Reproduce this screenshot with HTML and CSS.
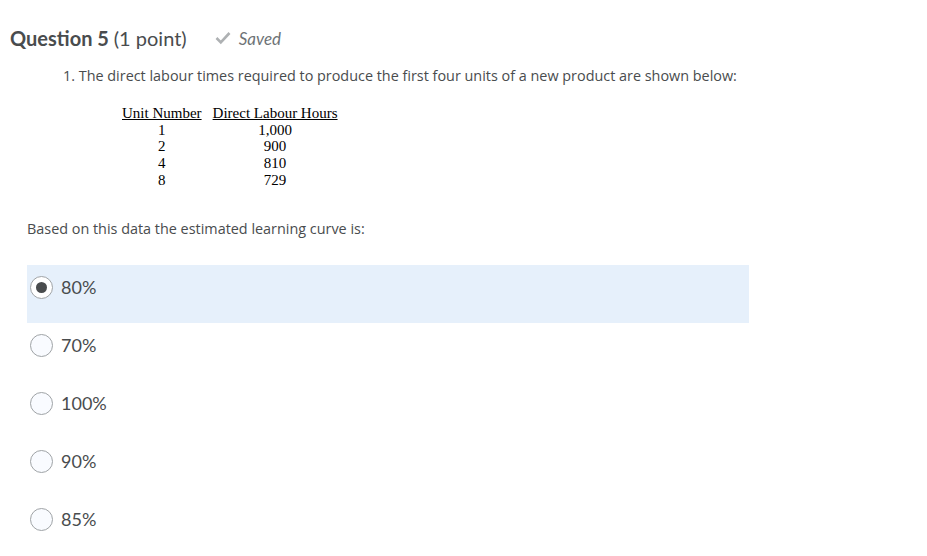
FILE: index.html
```html
<!DOCTYPE html>
<html>
<head>
<meta charset="utf-8">
<link rel="stylesheet" href="styles.css">
</head>
<body>
<div class="page">
  <div class="qhead">
    <h2 class="qtitle">Question 5 <span class="pts">(1 point)</span></h2>
    <span class="saved">
      <svg class="check" width="16" height="14" viewBox="0 0 16 14"><path d="M1.5 7 L5.8 11.3 L14.5 2" fill="none" stroke="#aeb1b3" stroke-width="2.6"/></svg>
      <span class="savedtxt">Saved</span>
    </span>
  </div>
  <ol class="qtext">
    <li>The direct labour times required to produce the first four units of a new product are shown below:</li>
  </ol>
  <table class="data">
    <tr><th>Unit Number</th><th>Direct Labour Hours</th></tr>
    <tr><td>1</td><td>1,000</td></tr>
    <tr><td>2</td><td>900</td></tr>
    <tr><td>4</td><td>810</td></tr>
    <tr><td>8</td><td>729</td></tr>
  </table>
  <p class="prompt">Based on this data the estimated learning curve is:</p>
  <div class="options">
    <label class="opt selected"><span class="radio on"></span><span class="lbl">80%</span></label>
    <label class="opt"><span class="radio"></span><span class="lbl">70%</span></label>
    <label class="opt"><span class="radio"></span><span class="lbl">100%</span></label>
    <label class="opt"><span class="radio"></span><span class="lbl">90%</span></label>
    <label class="opt"><span class="radio"></span><span class="lbl">85%</span></label>
  </div>
</div>
</body>
</html>
```
FILE: styles.css
```css
html, body { margin: 0; padding: 0; background: #fff; }
.page { padding: 23px 0 0 10px; font-family: Lato, sans-serif; color: #494c4e; }
.qhead { display: flex; align-items: center; height: 30px; }
.qtitle { margin: 0; font-size: 20px; font-weight: 700; color: #494c4e; }
.pts { font-weight: 400; }
.saved { display: flex; align-items: center; margin-left: 28px; gap: 8px; }
.savedtxt { font-style: italic; font-size: 17px; color: #6e7376; }
.qtext { margin: 12px 0 0; padding-left: 53px; list-style: none; font-family: "Open Sans", sans-serif; font-size: 14.4px; color: #494c4e; }
.qtext li { line-height: 22px; }
.qtext li::before { content: "1. "; }
.data { margin: 18px 0 0 112px; border-collapse: collapse; font-family: "Liberation Serif", serif; font-size: 15px; color: #000; }
.data th { font-weight: 400; text-decoration: underline; padding: 0; line-height: 16.7px; }
.data th + th { padding-left: 11px; }
.data td { text-align: center; padding: 0; line-height: 16.7px; }
.data td + td { padding-left: 11px; }
.prompt { margin: 29px 0 0 17px; font-family: "Open Sans", sans-serif; font-size: 14.4px; color: #494c4e; line-height: 22px; }
.options { margin-top: 25px; margin-left: 17px; display: flex; flex-direction: column; width: 722px; }
.opt { display: flex; align-items: center; height: 58px; box-sizing: border-box; padding-top: 11px; align-items: flex-start; }
.opt.selected { background: #e6f0fb; }
.radio { width: 21px; height: 21px; border: 1px solid #9fa3a6; border-radius: 50%; background: #f9fbff; margin-left: 3px; box-sizing: content-box; display: flex; align-items: center; justify-content: center; }
.radio.on { background: #fff; }
.radio.on::after { content: ""; width: 11px; height: 11px; border-radius: 50%; background: #494c4e; }
.lbl { margin-left: 8px; font-size: 18px; line-height: 23px; color: #494c4e; }
```
